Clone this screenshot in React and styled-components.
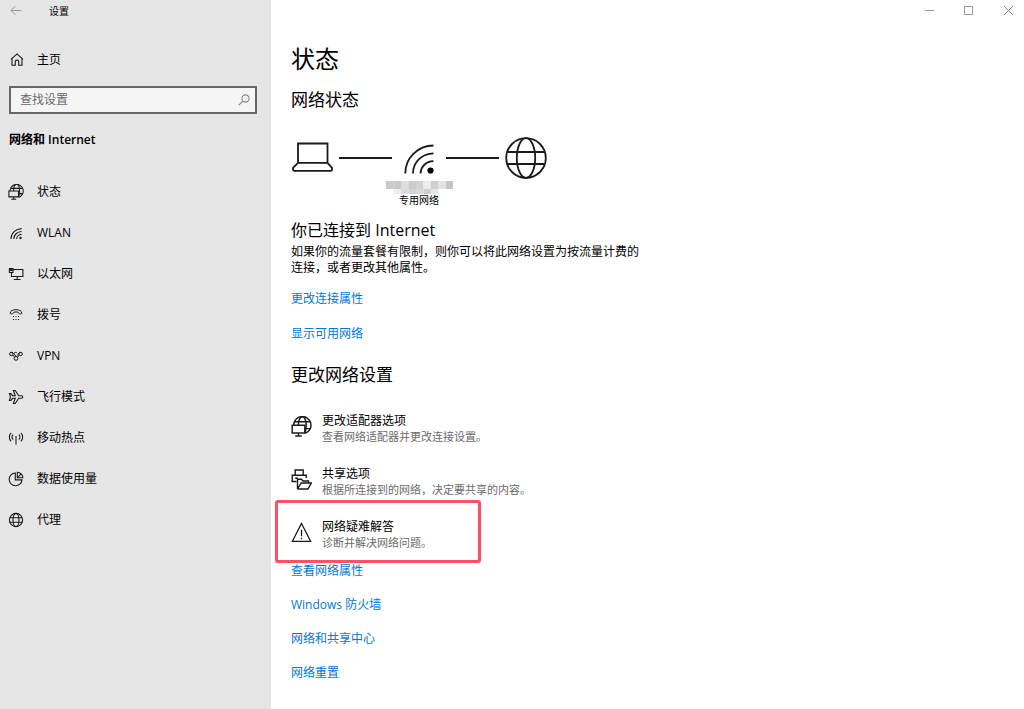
import React from "react";
import styled, { createGlobalStyle } from "styled-components";

const GlobalStyle = createGlobalStyle`
  *, *::before, *::after { box-sizing: border-box; }
  body {
    margin: 0;
    background: #ffffff;
    color: #000000;
    font-family: "Open Sans", "Noto Sans CJK SC", sans-serif;
    font-size: 12px;
    line-height: 16px;
  }
  h1, h2, h3, p, ul { margin: 0; padding: 0; font-weight: 400; }
  ul { list-style: none; }
`;

const Window = styled.div`
  display: grid;
  grid-template-columns: 271px minmax(0, 1fr);
  min-height: 100vh;
`;

const Sidebar = styled.aside`
  background: #e6e6e6;
  display: flex;
  flex-direction: column;
`;

const TitleBar = styled.header`
  height: 22px;
  display: flex;
  align-items: center;
  gap: 27px;
  padding-left: 10px;
  font-size: 10px;
`;

const BarButton = styled.button`
  width: ${(p) => p.$width || 12}px;
  height: 20px;
  padding: 0;
  border: 0;
  background: transparent;
  display: flex;
  align-items: center;
  justify-content: center;
`;

const WindowControls = styled.div`
  display: flex;
  justify-content: flex-end;
  height: 22px;
  margin-right: -4px;
`;

const NavLink = styled.a`
  height: 41px;
  display: flex;
  align-items: center;
  gap: 13px;
  padding-left: 8px;
  color: #000000;
  text-decoration: none;
`;

const HomeLink = styled(NavLink)`
  margin-top: 17px;
`;

const Nav = styled.nav`
  margin-top: 23px;
`;

const SearchBox = styled.label`
  display: flex;
  align-items: center;
  height: 28px;
  margin: 6px 14px 0 9px;
  padding: 0 5px 0 9px;
  border: 2px solid #666666;
  background: #f5f5f5;
`;

const SearchInput = styled.input`
  flex: 1;
  min-width: 0;
  padding: 0;
  border: 0;
  outline: 0;
  background: transparent;
  font: inherit;
  &::placeholder { color: #6a6a6a; opacity: 1; }
`;

const SectionName = styled.h2`
  margin: 18px 9px 0;
  font-weight: 600;
  font-size: 12px;
  line-height: 16px;
`;

const Main = styled.main`
  display: flex;
  flex-direction: column;
  min-width: 0;
`;

const Content = styled.div`
  padding: 21px 20px 24px;
  display: flex;
  flex-direction: column;
  align-items: flex-start;
`;

const PageTitle = styled.h1`
  font-size: 24px;
  line-height: 32px;
`;

const Heading = styled.h2`
  margin-top: ${(p) => p.$top}px;
  font-size: 17px;
  line-height: 24px;
`;

const Subheading = styled.h3`
  margin-top: 14px;
  font-size: 16px;
  line-height: 20px;
`;

const Body = styled.p`
  margin-top: 4px;
  max-width: 352px;
`;

const Diagram = styled.div`
  margin-top: 25px;
  display: grid;
  grid-template-columns: 42px 53px 42px 53px 42px;
  gap: 1px 6px;
  align-items: center;
`;

const Connector = styled.span`
  height: 2px;
  background: #1a1a1a;
`;

const NetworkLabel = styled.div`
  grid-column: 2 / 5;
  justify-self: center;
  display: flex;
  flex-direction: column;
  align-items: center;
  font-size: 10px;
  line-height: 12px;
`;

const LinkList = styled.ul`
  margin-top: ${(p) => p.$top}px;
  display: flex;
  flex-direction: column;
  gap: ${(p) => p.$gap}px;
`;

const TextLink = styled.a`
  display: block;
  color: #0078d7;
  text-decoration: none;
`;

const Options = styled.ul`
  margin-top: 26px;
  display: flex;
  flex-direction: column;
  gap: 21px;
`;

const Option = styled.a`
  position: relative;
  display: flex;
  align-items: flex-start;
  gap: 10px;
  color: #000000;
  text-decoration: none;
  > svg { margin-top: 3px; }
`;

const OptionText = styled.span`
  display: flex;
  flex-direction: column;
`;

const Description = styled.span`
  color: #6b6b6b;
  font-size: 11px;
`;

const Highlight = styled.span`
  position: absolute;
  left: -16px;
  top: -19px;
  width: 206px;
  height: 63px;
  border: 3px solid #ff5165;
  border-radius: 3px;
`;

const Icon = ({ size = 16, width = 1.1, color = "#1a1a1a", box = 16, children }) => (
  <svg width={size} height={size} viewBox={`0 0 ${box} ${box}`} fill="none" stroke={color}
    strokeWidth={width} aria-hidden="true">{children}</svg>
);

const GlobeLines = () => (
  <>
    <circle cx="8" cy="8" r="6.6" />
    <ellipse cx="8" cy="8" rx="3" ry="6.6" />
    <path d="M1.8 5.8H14.2M1.8 10.2H14.2" />
  </>
);

const GlobeMonitor = () => (
  <>
    <path d="M2 7A6.6 6.6 0 1 1 10.8 13.2" />
    <path d="M5.6 7C5.6 3.3 6.9 .5 8.6 .5S11.6 3.3 11.6 7C11.6 9.6 11.2 11.6 10.5 12.8M2.7 4.4H14.5M10.5 9.6H14.5" />
    <path d="M.9 7H10.5V12.9H.9ZM5.7 12.9V15.2M3.2 15.2H8.2" />
  </>
);

const icons = {
  status: <GlobeMonitor />,
  wlan: (
    <>
      <path d="M3 14C3 8.2 7.6 3.8 13.6 3.6M5.8 14C5.8 9.9 9.2 6.6 13.6 6.5M8.6 14C8.6 11.5 10.7 9.5 13.6 9.4" />
      <circle cx="12.5" cy="13" r="1.2" fill="#1a1a1a" stroke="none" />
    </>
  ),
  ethernet: <path d="M5 3.5H14.9V10.5H3.5V6.5M1.4 2.5H5V6.5H1.4ZM2.6 2.5V4.5H3.8V2.5M9.2 10.5V13.5M5.8 13.5H12.6" />,
  dial: (
    <>
      <path strokeWidth="1" d="M2.2 6.4C2.2 3.6 5 2.7 8 2.7S13.8 3.6 13.8 6.4C13.6 7.4 11 7.2 10.7 6.2C10.6 5.2 9.6 5 8 5S5.4 5.2 5.3 6.2C5 7.2 2.4 7.4 2.2 6.4Z" />
      <path strokeWidth="1" d="M5 9.5H6M7.5 9.5H8.5M10 9.5H11M5 12.5H6M7.5 12.5H8.5M10 12.5H11" />
    </>
  ),
  vpn: (
    <g strokeWidth="1">
      <circle cx="3.3" cy="6" r="1.7" />
      <circle cx="12.7" cy="6" r="1.7" />
      <circle cx="8" cy="10.4" r="1.9" />
      <path d="M3.3 4.3C6.4 4.1 5.6 7.2 8.6 8.5M4.8 6.9L6.5 9.2M12.7 4.3C10.6 4.1 10.4 6.2 9.3 7.6M11.2 6.9L9.5 9.2M6.2 4.9C7 4.1 8.6 4.2 9.2 5.2" />
    </g>
  ),
  plane: <path d="M1.4 4.6H2.9L4.6 6.7H7.2L5.4 1.5H7.2L10.7 6.7H13.5C15.2 6.9 15.2 9.1 13.5 9.3H10.7L7.2 14.5H5.4L7.2 9.3H4.6L2.9 11.4H1.4L2.4 8Z" />,
  hotspot: (
    <>
      <path d="M3.2 2.8C.7 5.2.7 9 3.2 11.4M12.8 2.8C15.3 5.2 15.3 9 12.8 11.4M5.2 4.6C3.7 6.1 3.7 8.1 5.2 9.6M10.8 4.6C12.3 6.1 12.3 8.1 10.8 9.6M8 6V14.5" />
    </>
  ),
  data: (
    <>
      <path d="M7.3 2A6.4 6.4 0 1 0 14 8.9H7.3Z" />
      <path d="M9.3 1.2V6.8H14.9A5.7 5.7 0 0 0 9.3 1.2ZM9.3 6.8L13.2 2.9" />
    </>
  ),
  proxy: <GlobeLines />,
};

const navItems = [
  ["status", "状态"],
  ["wlan", "WLAN"],
  ["ethernet", "以太网"],
  ["dial", "拨号"],
  ["vpn", "VPN"],
  ["plane", "飞行模式"],
  ["hotspot", "移动热点"],
  ["data", "数据使用量"],
  ["proxy", "代理"],
];

const options = [
  {
    title: "更改适配器选项",
    text: "查看网络适配器并更改连接设置。",
    icon: <Icon size={21}><GlobeMonitor /></Icon>,
  },
  {
    title: "共享选项",
    text: "根据所连接到的网络，决定要共享的内容。",
    icon: (
      <Icon size={21} box={21} width={1.4}>
        <path d="M4.2 6.2V1H12.2V6.2M5.5 12.5H1.2V6.2H15.2V9M4.2 9.2H7" />
        <path d="M6.5 20V10.3H10.5L12 12H17.5V14M6.5 20H17L20.3 14H10.2L6.5 20" />
      </Icon>
    ),
  },
  {
    title: "网络疑难解答",
    text: "诊断并解决网络问题。",
    highlighted: true,
    icon: (
      <Icon size={21} box={21} width={1.3}>
        <path d="M10.5 1.5L19.6 19.3H1.4ZM10.5 7.8V14.2M10.5 15.7V17.2" />
      </Icon>
    ),
  },
];

const mosaic = [
  ["#c9c9c9", "#c9c9c9", "#dedede", "#cbcbcb", "#d2d2d2", "#ececec", "#d0d0d0", "#e3e3e3", "#c4c4c4"],
  ["", "#eeeeee", "#dcdcdc", "#d2d2d2", "#d9d9d9", "#cfcfcf", "#e6e6e6", "", ""],
];

const Links = ({ items, top, gap }) => (
  <LinkList $top={top} $gap={gap}>
    {items.map((item) => (
      <li key={item}><TextLink href="#">{item}</TextLink></li>
    ))}
  </LinkList>
);

export default function App() {
  return (
    <>
      <GlobalStyle />
      <Window>
        <Sidebar>
          <TitleBar>
            <BarButton aria-label="返回">
              <Icon size={12} box={12} width={1} color="#999999"><path d="M11.5 5.5H1M5.5 1L1 5.5L5.5 10" /></Icon>
            </BarButton>
            <span>设置</span>
          </TitleBar>
          <HomeLink href="#">
            <Icon><path d="M4 6.4V13.2H7.3V9.5C7.3 7.6 10.7 7.6 10.7 9.5V13.2H14V6.4M3 7.4L9 1.9L15 7.4" /></Icon>
            <span>主页</span>
          </HomeLink>
          <SearchBox>
            <SearchInput type="text" placeholder="查找设置" aria-label="查找设置" />
            <Icon size={12} box={12} color="#888888"><circle cx="7.5" cy="4.5" r="3.6" /><path d="M5 7L.8 11.2" /></Icon>
          </SearchBox>
          <SectionName>网络和 Internet</SectionName>
          <Nav>
            {navItems.map(([id, label]) => (
              <NavLink key={id} href="#">
                <Icon>{icons[id]}</Icon>
                <span>{label}</span>
              </NavLink>
            ))}
          </Nav>
        </Sidebar>
        <Main>
          <WindowControls>
            <BarButton $width={40} aria-label="最小化">
              <Icon size={9} box={9} width={1} color="#999999"><path d="M0 4.5H9" /></Icon>
            </BarButton>
            <BarButton $width={39} aria-label="最大化">
              <Icon size={9} box={9} width={1} color="#999999"><path d="M.5 .5H8.5V8.5H.5Z" /></Icon>
            </BarButton>
            <BarButton $width={40} aria-label="关闭">
              <Icon size={9} box={9} width={1} color="#888888"><path d="M0 0L9 9M9 0L0 9" /></Icon>
            </BarButton>
          </WindowControls>
          <Content>
            <PageTitle>状态</PageTitle>
            <Heading $top={13}>网络状态</Heading>
            <Diagram>
              <Icon size={42} box={42} width={1.8}>
                <path d="M7 6.5H36.5V25.8H7ZM7 25.8L2 30.8V32.2Q2 33.8 3.6 33.8H39.4Q41 33.8 41 32.2V30.8L36.5 25.8" />
              </Icon>
              <Connector />
              <Icon size={42} box={42} width={1.8}>
                <path d="M7.3 36.5C7.3 21 19.3 8.8 35.5 8.5M15 36.5C15 25.5 23.5 16.7 35.5 16.4M22.6 36.5C22.6 30 27.8 24.4 35.5 24.2" />
                <circle cx="32.5" cy="33.5" r="3.1" fill="#000000" stroke="none" />
              </Icon>
              <Connector />
              <Icon size={42} box={42} width={1.8}>
                <circle cx="21" cy="21" r="19.8" />
                <ellipse cx="21" cy="21" rx="9.2" ry="19.8" />
                <path d="M2.5 15H39.5M2.5 27H39.5" />
              </Icon>
              <NetworkLabel>
                <svg width="67" height="14" viewBox="0 0 67 14" aria-hidden="true">
                  {mosaic.map((row, r) => row.map((fill, c) => fill && (
                    <rect key={`${r}-${c}`} x={c * 7.5} y={r * 8 + 1} width="7.5" height={r ? 5 : 8} fill={fill} />
                  )))}
                </svg>
                <span>专用网络</span>
              </NetworkLabel>
            </Diagram>
            <Subheading>你已连接到 Internet</Subheading>
            <Body>如果你的流量套餐有限制，则你可以将此网络设置为按流量计费的连接，或者更改其他属性。</Body>
            <Links top={15} gap={19} items={["更改连接属性", "显示可用网络"]} />
            <Heading $top={21}>更改网络设置</Heading>
            <Options>
              {options.map((o) => (
                <li key={o.title}>
                  <Option href="#">
                    {o.icon}
                    <OptionText>
                      <span>{o.title}</span>
                      <Description>{o.text}</Description>
                    </OptionText>
                    {o.highlighted && <Highlight />}
                  </Option>
                </li>
              ))}
            </Options>
            <Links top={12} gap={18} items={["查看网络属性", "Windows 防火墙", "网络和共享中心", "网络重置"]} />
          </Content>
        </Main>
      </Window>
    </>
  );
}
